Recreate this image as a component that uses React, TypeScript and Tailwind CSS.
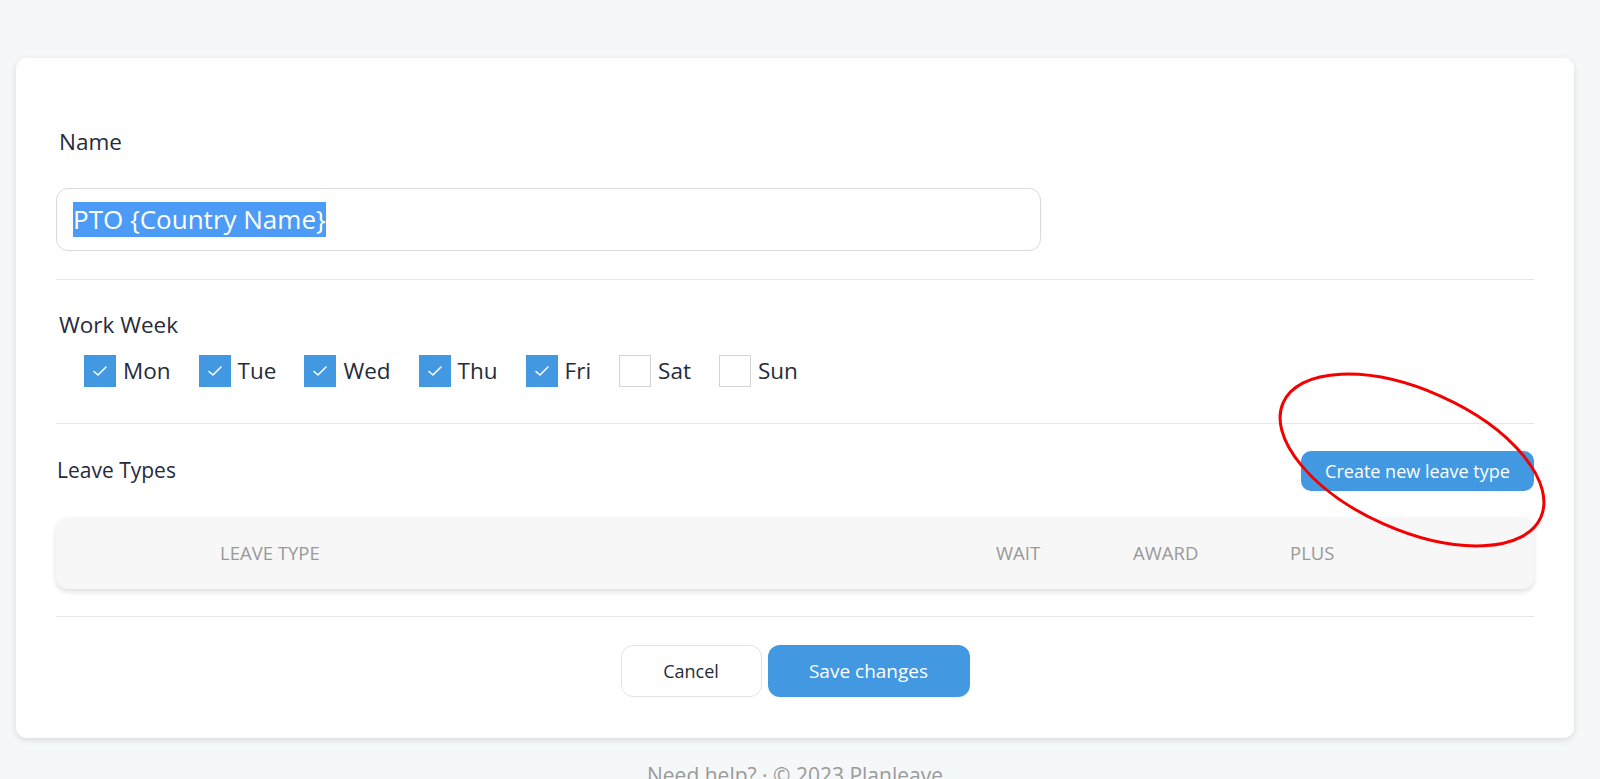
import React from "react";

const days = [
  { label: "Mon", checked: true },
  { label: "Tue", checked: true },
  { label: "Wed", checked: true },
  { label: "Thu", checked: true },
  { label: "Fri", checked: true },
  { label: "Sat", checked: false },
  { label: "Sun", checked: false },
];

function Box({ checked }: { checked: boolean }) {
  if (checked) {
    return (
      <div className="w-[32px] h-[32px] bg-[#4299e1] flex items-center justify-center shrink-0">
        <svg width="16" height="12" viewBox="0 0 16 12" fill="none">
          <polyline points="2,6.5 6,10 14,2" stroke="white" strokeWidth="1.6" strokeLinecap="round" strokeLinejoin="round" />
        </svg>
      </div>
    );
  }
  return <div className="w-[32px] h-[32px] bg-white border border-[#d4d4d4] shrink-0" />;
}

export default function App() {
  return (
    <div
      className="relative h-[779px] w-[1600px] bg-[#f5f8f9] overflow-hidden"
      style={{ fontFamily: '"Open Sans", sans-serif' }}
    >
      <div className="pt-[58px] pl-4">
        <div className="w-[1558px] bg-white rounded-[10px] shadow-[0_2px_6px_rgba(0,0,0,0.12)] px-10 pt-[69px] pb-[41px] text-[#262b3a]">
          <div className="pl-[3px] text-[22.5px] leading-[30px]">Name</div>
          <div className="mt-[31px] w-[985px] h-[63px] border border-[#d7d9de] rounded-[12px] flex items-center pl-4">
            <span className="text-[26px] leading-[35px] bg-[#4b9bf7] text-white">PTO {"{"}Country Name{"}"}</span>
          </div>
          <div className="mt-[28px] h-px bg-[#e6e6e6]" />

          <div className="mt-[30px] pl-[3px] text-[22.5px] leading-[30px]">Work Week</div>
          <div className="mt-[15px] ml-7 flex items-center gap-7">
            {days.map((d) => (
              <div key={d.label} className="flex items-center gap-[7px]">
                <Box checked={d.checked} />
                <span className="text-[22.5px] leading-[30px]">{d.label}</span>
              </div>
            ))}
          </div>
          <div className="mt-[36px] h-px bg-[#e6e6e6]" />

          <div className="mt-[27px] flex items-center justify-between">
            <div className="pl-[1px] -mt-[3px] text-[21px] leading-[28px]">Leave Types</div>
            <button className="w-[233px] h-[40px] rounded-[10px] bg-[#4299e1] text-white text-[18px] font-medium">
              Create new leave type
            </button>
          </div>

          <div className="mt-[26px] h-[72px] rounded-[12px] bg-[#f7f7f7] shadow-[0_3px_5px_rgba(0,0,0,0.12)] flex items-center pl-[164px] text-[18.5px] text-[#999999]">
            <div className="w-[776px]">LEAVE TYPE</div>
            <div className="w-[137px]">WAIT</div>
            <div className="w-[157px]">AWARD</div>
            <div>PLUS</div>
          </div>

          <div className="mt-[27px] h-px bg-[#e6e6e6]" />

          <div className="mt-[28px] flex justify-center gap-[6px]">
            <button className="w-[141px] h-[52px] rounded-[12px] border border-[#e3e3e3] bg-white text-[18px] text-[#262b3a]">
              Cancel
            </button>
            <button className="w-[202px] h-[52px] rounded-[12px] bg-[#4299e1] text-white text-[19px] font-medium">
              Save changes
            </button>
          </div>
        </div>
      </div>
      <div className="mt-[22px] text-center text-[21px] leading-[30px] text-[#9a9a9a] w-[1590px]">
        Need help? · © 2023 Planleave
      </div>

      <svg className="absolute left-0 top-0 pointer-events-none" width="1600" height="779" viewBox="0 0 1600 779">
        <ellipse cx="1412" cy="460" rx="141" ry="70" transform="rotate(24 1412 460)" fill="none" stroke="#f40000" strokeWidth="3" />
      </svg>
    </div>
  );
}
